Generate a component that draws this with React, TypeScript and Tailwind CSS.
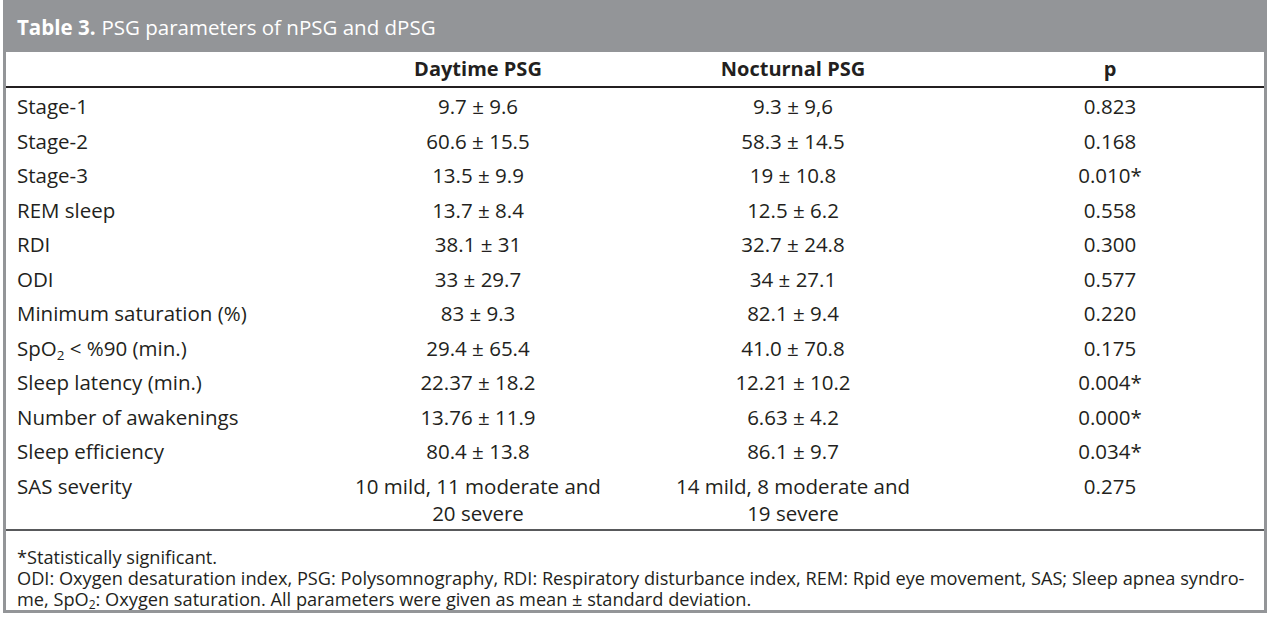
const rows: { label: React.ReactNode; day: React.ReactNode; night: React.ReactNode; p: string }[] = [
  { label: "Stage-1", day: "9.7 ± 9.6", night: "9.3 ± 9,6", p: "0.823" },
  { label: "Stage-2", day: "60.6 ± 15.5", night: "58.3 ± 14.5", p: "0.168" },
  { label: "Stage-3", day: "13.5 ± 9.9", night: "19 ± 10.8", p: "0.010*" },
  { label: "REM sleep", day: "13.7 ± 8.4", night: "12.5 ± 6.2", p: "0.558" },
  { label: "RDI", day: "38.1 ± 31", night: "32.7 ± 24.8", p: "0.300" },
  { label: "ODI", day: "33 ± 29.7", night: "34 ± 27.1", p: "0.577" },
  { label: "Minimum saturation (%)", day: "83 ± 9.3", night: "82.1 ± 9.4", p: "0.220" },
  {
    label: (
      <>
        SpO<sub className="relative top-[4px] align-baseline text-[13.5px]">2</sub> &lt; %90 (min.)
      </>
    ),
    day: "29.4 ± 65.4",
    night: "41.0 ± 70.8",
    p: "0.175"
  },
  { label: "Sleep latency (min.)", day: "22.37 ± 18.2", night: "12.21 ± 10.2", p: "0.004*" },
  { label: "Number of awakenings", day: "13.76 ± 11.9", night: "6.63 ± 4.2", p: "0.000*" },
  { label: "Sleep efficiency", day: "80.4 ± 13.8", night: "86.1 ± 9.7", p: "0.034*" },
  {
    label: "SAS severity",
    day: (
      <>
        10 mild, 11 moderate and
        <br />
        20 severe
      </>
    ),
    night: (
      <>
        14 mild, 8 moderate and
        <br />
        19 severe
      </>
    ),
    p: "0.275"
  }
];

const grid = "grid grid-cols-[320px_304px_326px_1fr]";

export default function App() {
  return (
    <div className="h-[618px] w-[1271px] bg-white pl-[3px] pr-[4px] pb-[5px] font-['Open_Sans',sans-serif] text-[#231f20]">
      <div className="border-[3px] border-t-0 border-[#939598]">
        <div className="flex h-[52px] items-center bg-[#939598] pl-[11px] pt-[2px] text-[20.5px] text-white">
          <span className="font-bold">Table 3.</span>
          <span className="ml-[6px]">PSG parameters of nPSG and dPSG</span>
        </div>

        <div className={`${grid} h-[36px] items-center border-b-2 border-[#231f20] text-[20px] font-bold`}>
          <div />
          <div className="text-center">Daytime PSG</div>
          <div className="text-center">Nocturnal PSG</div>
          <div className="text-center">p</div>
        </div>

        <div className="border-b-2 border-[#58595b] text-[20.5px] leading-[27px]">
          {rows.map((row, i) => (
            <div key={i} className={`${grid} pt-[5px] pb-[2.5px]`}>
              <div className="pl-[11px]">{row.label}</div>
              <div className="text-center">{row.day}</div>
              <div className="text-center">{row.night}</div>
              <div className="text-center">{row.p}</div>
            </div>
          ))}
        </div>

        <div className="whitespace-nowrap pl-[11px] pt-[16px] text-[18.2px] leading-[21px]">
          <p>*Statistically significant.</p>
          <p>
            ODI: Oxygen desaturation index, PSG: Polysomnography, RDI: Respiratory disturbance index, REM: Rpid eye
            movement, SAS; Sleep apnea syndro-
          </p>
          <p>
            me, SpO<sub className="relative top-[3px] align-baseline text-[12px] leading-none">2</sub>: Oxygen
            saturation. All parameters were given as mean ± standard deviation.
          </p>
        </div>
      </div>
    </div>
  );
}
